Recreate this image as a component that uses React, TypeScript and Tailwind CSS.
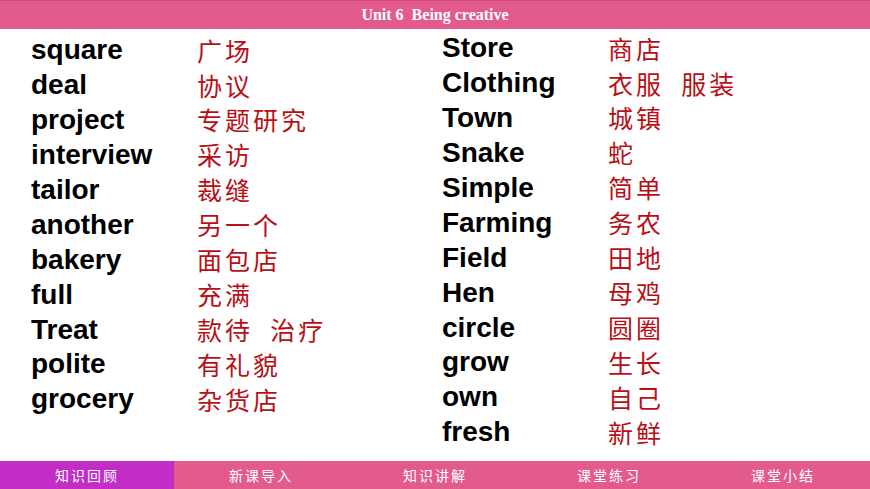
const leftWords: [string, string][] = [
  ["square", "广场"],
  ["deal", "协议"],
  ["project", "专题研究"],
  ["interview", "采访"],
  ["tailor", "裁缝"],
  ["another", "另一个"],
  ["bakery", "面包店"],
  ["full", "充满"],
  ["Treat", "款待  治疗"],
  ["polite", "有礼貌"],
  ["grocery", "杂货店"],
];

const rightWords: [string, string][] = [
  ["Store", "商店"],
  ["Clothing", "衣服  服装"],
  ["Town", "城镇"],
  ["Snake", "蛇"],
  ["Simple", "简单"],
  ["Farming", "务农"],
  ["Field", "田地"],
  ["Hen", "母鸡"],
  ["circle", "圆圈"],
  ["grow", "生长"],
  ["own", "自己"],
  ["fresh", "新鲜"],
];

const tabs = ["知识回顾", "新课导入", "知识讲解", "课堂练习", "课堂小结"];

function WordRow({ en, zh }: { en: string; zh: string }) {
  return (
    <div className="flex h-[34.9px] items-center">
      <span className="w-[166px] shrink-0 font-['Liberation_Sans',sans-serif] text-[28px] font-bold text-black">
        {en}
      </span>
      <span className="font-['Noto_Sans_CJK_SC',sans-serif] text-[25px] tracking-[3px] whitespace-pre text-[#b80f16]">
        {zh}
      </span>
    </div>
  );
}

export default function App() {
  return (
    <div className="flex h-[489px] w-[870px] flex-col overflow-hidden bg-white">
      {/* 상단 제목 바 */}
      <div className="flex h-[29px] shrink-0 items-center justify-center border-t border-[#d14a7c] bg-[#e35b8e]">
        <span className="font-['Liberation_Serif',serif] text-[16px] font-bold whitespace-pre text-white">
          Unit 6  Being creative
        </span>
      </div>

      <div className="flex flex-1">
        <div className="w-[442px] shrink-0 pt-[4px] pl-[31px]">
          {leftWords.map(([en, zh]) => (
            <WordRow key={en} en={en} zh={zh} />
          ))}
        </div>
        <div className="pt-[2px]">
          {rightWords.map(([en, zh]) => (
            <WordRow key={en} en={en} zh={zh} />
          ))}
        </div>
      </div>

      {/* 하단 탭 */}
      <div className="grid h-[28px] shrink-0 grid-cols-5 bg-[#e35b8c]">
        {tabs.map((t, i) => (
          <div
            key={t}
            className={
              i === 0
                ? "flex items-center justify-center bg-[#c22dc8] font-['Noto_Sans_CJK_SC',serif] text-[14px] tracking-[2px] text-white"
                : "flex items-center justify-center font-['Noto_Sans_CJK_SC',serif] text-[14px] tracking-[2px] text-white"
            }
          >
            {t}
          </div>
        ))}
      </div>
    </div>
  );
}
